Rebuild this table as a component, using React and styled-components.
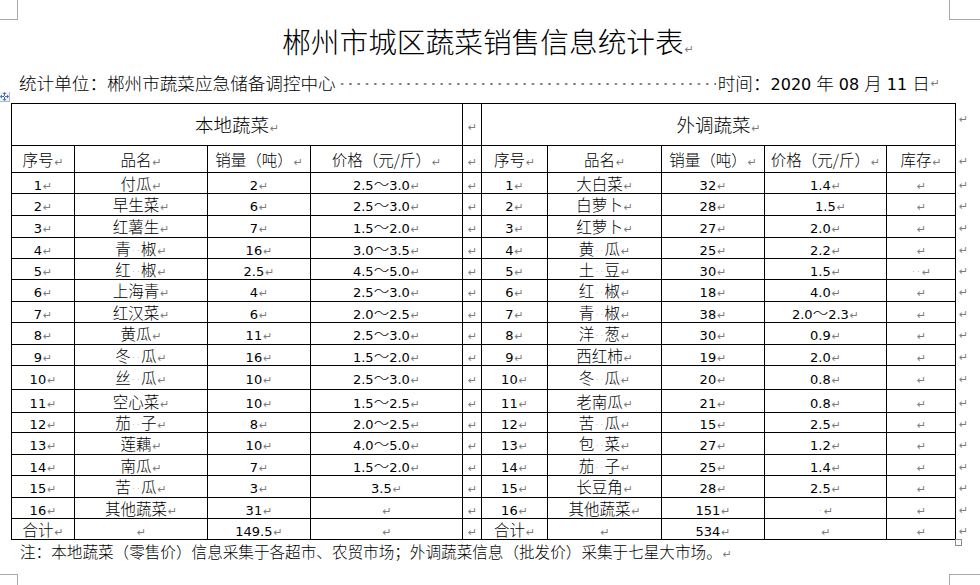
import React from "react";
import styled, { createGlobalStyle } from "styled-components";

const GlobalStyle = createGlobalStyle`
  html, body {
    margin: 0;
    padding: 0;
    background: #fff;
  }
  body {
    font-family: "Noto Sans CJK SC", sans-serif;
    color: #000;
  }
`;

const localRows = [
  ["1", "付瓜", "2", "2.5～3.0"],
  ["2", "早生菜", "6", "2.5～3.0"],
  ["3", "红薯生", "7", "1.5～2.0"],
  ["4", "青  椒", "16", "3.0～3.5"],
  ["5", "红  椒", "2.5", "4.5～5.0"],
  ["6", "上海青", "4", "2.5～3.0"],
  ["7", "红汉菜", "6", "2.0～2.5"],
  ["8", "黄瓜", "11", "2.5～3.0"],
  ["9", "冬  瓜", "16", "1.5～2.0"],
  ["10", "丝  瓜", "10", "2.5～3.0"],
  ["11", "空心菜", "10", "1.5～2.5"],
  ["12", "茄  子", "8", "2.0～2.5"],
  ["13", "莲藕", "10", "4.0～5.0"],
  ["14", "南瓜", "7", "1.5～2.0"],
  ["15", "苦  瓜", "3", "3.5"],
  ["16", "其他蔬菜", "31", ""],
];

const outsideRows = [
  ["1", "大白菜", "32", "1.4", ""],
  ["2", "白萝卜", "28", "^1.5", ""],
  ["3", "红萝卜", "27", "2.0", ""],
  ["4", "黄  瓜", "25", "2.2", ""],
  ["5", "土  豆", "30", "1.5", "  "],
  ["6", "红  椒", "18", "4.0", ""],
  ["7", "青  椒", "38", "2.0～2.3", ""],
  ["8", "洋  葱", "30", "0.9", ""],
  ["9", "西红柿", "19", "2.0", ""],
  ["10", "冬  瓜", "20", "0.8", ""],
  ["11", "老南瓜", "21", "0.8", ""],
  ["12", "苦  瓜", "15", "2.5", ""],
  ["13", "包  菜", "27", "1.2", ""],
  ["14", "茄  子", "25", "1.4", ""],
  ["15", "长豆角", "28", "2.5", ""],
  ["16", "其他蔬菜", "151", " ", ""],
];

// row heights as measured off the page
const rowHeights = [21, 22, 22, 21, 21, 22, 21, 22, 21, 24, 23, 20, 22, 21, 22, 21];
const colWidths = [63, 133, 103, 152, 19, 66, 114, 103, 122, 69];

const Page = styled.div`
  position: relative;
  width: 980px;
  height: 585px;
  overflow: hidden;
`;

const CornerMark = styled.div`
  position: absolute;
  width: 17px;
  height: 19px;
  border-color: #a8a8a8;
  border-style: solid;
  border-width: 0;
  ${({ $pos }) => $pos === "tl" && "left: 0; top: 0; border-right-width: 1px; border-bottom-width: 1px;"}
  ${({ $pos }) => $pos === "tr" && "left: 949px; top: 0; width: 31px; border-left-width: 1px; border-bottom-width: 1px;"}
  ${({ $pos }) => $pos === "bl" && "left: 0; top: 574px; border-right-width: 1px; border-top-width: 1px;"}
  ${({ $pos }) => $pos === "br" && "left: 949px; top: 574px; width: 31px; border-left-width: 1px; border-top-width: 1px;"}
`;

const MoveHandle = styled.div`
  position: absolute;
  left: 0;
  top: 92px;
  width: 9px;
  height: 9px;
  border-right: 1px solid #b8b8b8;
  border-bottom: 1px solid #b8b8b8;
  background: #f4f4f4;
  display: flex;
  align-items: center;
  justify-content: center;
`;

const ResizeHandle = styled.div`
  position: absolute;
  left: 955px;
  top: 539px;
  width: 5px;
  height: 5px;
  border: 1px solid #8a8a8a;
  background: #fff;
`;

const Title = styled.h1`
  margin: 0;
  padding-top: 22px;
  height: 38px;
  line-height: 38px;
  font-size: 28.7px;
  font-weight: 300;
  text-align: center;
  padding-right: 4px;
`;

const SubLine = styled.div`
  display: flex;
  align-items: center;
  height: 22px;
  margin-top: 12px;
  padding: 0 40px 0 19px;
  font-size: 17.6px;
  font-weight: 300;
  line-height: 22px;
  white-space: nowrap;
`;

const Leader = styled.span`
  flex: 1;
  align-self: stretch;
  margin: 0 2px;
  background-image: radial-gradient(circle, #6c6c6c 0.9px, transparent 1.3px);
  background-size: 8.3px 100%;
  background-repeat: repeat-x;
  background-position: 0 1px;
`;

const Num = styled.span`
  font-family: "DejaVu Sans", sans-serif;
  font-size: ${({ $size }) => $size || 13}px;
  font-weight: normal;
  line-height: 1;
`;

const Gap = styled.span`
  display: inline-block;
  height: 0;
  width: ${({ $w }) => $w || 4}px;
`;

const Space = styled.span`
  font-family: "DejaVu Sans", sans-serif;
  font-size: 12px;
  line-height: 1;
  color: #7a7a7a;
  letter-spacing: 0.6px;
  padding-left: 0.6px;
`;

const Mark = styled.span`
  margin-left: 1px;
  font-family: "DejaVu Sans", sans-serif;
  font-size: 11px;
  line-height: 1;
  font-weight: normal;
  color: #7c7c7c;
`;

const TableWrap = styled.div`
  margin: 9px 0 0 11px;
`;

const Sheet = styled.table`
  border-collapse: collapse;
  table-layout: fixed;
  font-size: 15.5px;
  font-weight: 300;
`;

const Row = styled.tr`
  height: ${({ $h }) => $h}px;
`;

const Cell = styled.td`
  border: 1px solid #000;
  padding: 0;
  height: ${({ $h }) => $h - 1}px;
  text-align: center;
  vertical-align: middle;
  line-height: 16px;
  white-space: nowrap;
  font-size: ${({ $big }) => ($big ? "18.5px" : "inherit")};
`;

const EndCell = styled.td`
  border: none;
  padding: ${({ $top }) => $top || 0}px 0 0 2px;
  vertical-align: ${({ $top }) => ($top ? "top" : "middle")};
  line-height: 12px;
`;

const Note = styled.p`
  margin: 0;
  height: 22px;
  line-height: 22px;
  padding-left: 20px;
  font-size: 15.6px;
  font-weight: 300;
  white-space: nowrap;
`;

function renderText(str) {
  return str
    .split(/(\d[\d.]*| |\^)/)
    .filter(Boolean)
    .map((part, i) => {
      if (part === " ") return <Space key={i}>·</Space>;
      if (part === "^") return <Gap key={i} $w={10} />;
      if (/^\d/.test(part)) return <Num key={i}>{part}</Num>;
      return <span key={i}>{part}</span>;
    });
}

const TextCell = ({ text = "", colSpan, big, h }) => (
  <Cell colSpan={colSpan} $big={big} $h={h}>
    {renderText(text)}
    <Mark>↵</Mark>
  </Cell>
);

const MoveIcon = () => (
  <svg width="9" height="9" viewBox="0 0 9 9">
    <g fill="#3a6fc4">
      <path d="M4.5 0 L6.5 2 L5 2 L5 4 L4 4 L4 2 L2.5 2 Z" />
      <path d="M4.5 9 L6.5 7 L5 7 L5 5 L4 5 L4 7 L2.5 7 Z" />
      <path d="M0 4.5 L2 2.5 L2 4 L4 4 L4 5 L2 5 L2 6.5 Z" />
      <path d="M9 4.5 L7 2.5 L7 4 L5 4 L5 5 L7 5 L7 6.5 Z" />
    </g>
  </svg>
);

export default function App() {
  return (
    <Page>
      <GlobalStyle />
      <CornerMark $pos="tl" />
      <CornerMark $pos="tr" />
      <CornerMark $pos="bl" />
      <CornerMark $pos="br" />

      <Title>
        郴州市城区蔬菜销售信息统计表
        <Mark>↵</Mark>
      </Title>

      <SubLine>
        <span>统计单位：郴州市蔬菜应急储备调控中心</span>
        <Leader />
        <span>
          时间：<Num $size={16}>2020</Num>
          <Gap $w={5} />年<Gap $w={5} />
          <Num $size={16}>08</Num>
          <Gap $w={5} />月<Gap $w={5} />
          <Num $size={16}>11</Num>
          <Gap $w={5} />日
        </span>
        <Mark>↵</Mark>
      </SubLine>

      <MoveHandle>
        <MoveIcon />
      </MoveHandle>

      <TableWrap>
        <Sheet>
          <colgroup>
            {colWidths.map((w, i) => (
              <col key={i} style={{ width: w }} />
            ))}
            <col style={{ width: 20 }} />
          </colgroup>
          <tbody>
            <Row $h={42}>
              <TextCell colSpan={4} text="本地蔬菜" big h={42} />
              <TextCell h={42} />
              <TextCell colSpan={5} text="外调蔬菜" big h={42} />
              <EndCell $top={6}>
                <Mark>↵</Mark>
              </EndCell>
            </Row>
            <Row $h={27}>
              <TextCell text="序号" h={27} />
              <TextCell text="品名" h={27} />
              <TextCell text="销量（吨）" h={27} />
              <TextCell text="价格（元/斤）" h={27} />
              <TextCell h={27} />
              <TextCell text="序号" h={27} />
              <TextCell text="品名" h={27} />
              <TextCell text="销量（吨）" h={27} />
              <TextCell text="价格（元/斤）" h={27} />
              <TextCell text="库存" h={27} />
              <EndCell>
                <Mark>↵</Mark>
              </EndCell>
            </Row>
            {localRows.map((l, i) => {
              const r = outsideRows[i];
              const h = rowHeights[i];
              return (
                <Row key={i} $h={h}>
                  {l.map((t, j) => (
                    <TextCell key={"l" + j} text={t} h={h} />
                  ))}
                  <TextCell h={h} />
                  {r.map((t, j) => (
                    <TextCell key={"r" + j} text={t} h={h} />
                  ))}
                  <EndCell>
                    <Mark>↵</Mark>
                  </EndCell>
                </Row>
              );
            })}
            <Row $h={21}>
              <TextCell text="合计" h={21} />
              <TextCell h={21} />
              <TextCell text="149.5" h={21} />
              <TextCell h={21} />
              <TextCell h={21} />
              <TextCell text="合计" h={21} />
              <TextCell h={21} />
              <TextCell text="534" h={21} />
              <TextCell h={21} />
              <TextCell h={21} />
              <EndCell>
                <Mark>↵</Mark>
              </EndCell>
            </Row>
          </tbody>
        </Sheet>
      </TableWrap>

      <Note>
        注：本地蔬菜（零售价）信息采集于各超市、农贸市场；外调蔬菜信息（批发价）采集于七星大市场。
        <Mark>↵</Mark>
      </Note>
      <ResizeHandle />
    </Page>
  );
}
